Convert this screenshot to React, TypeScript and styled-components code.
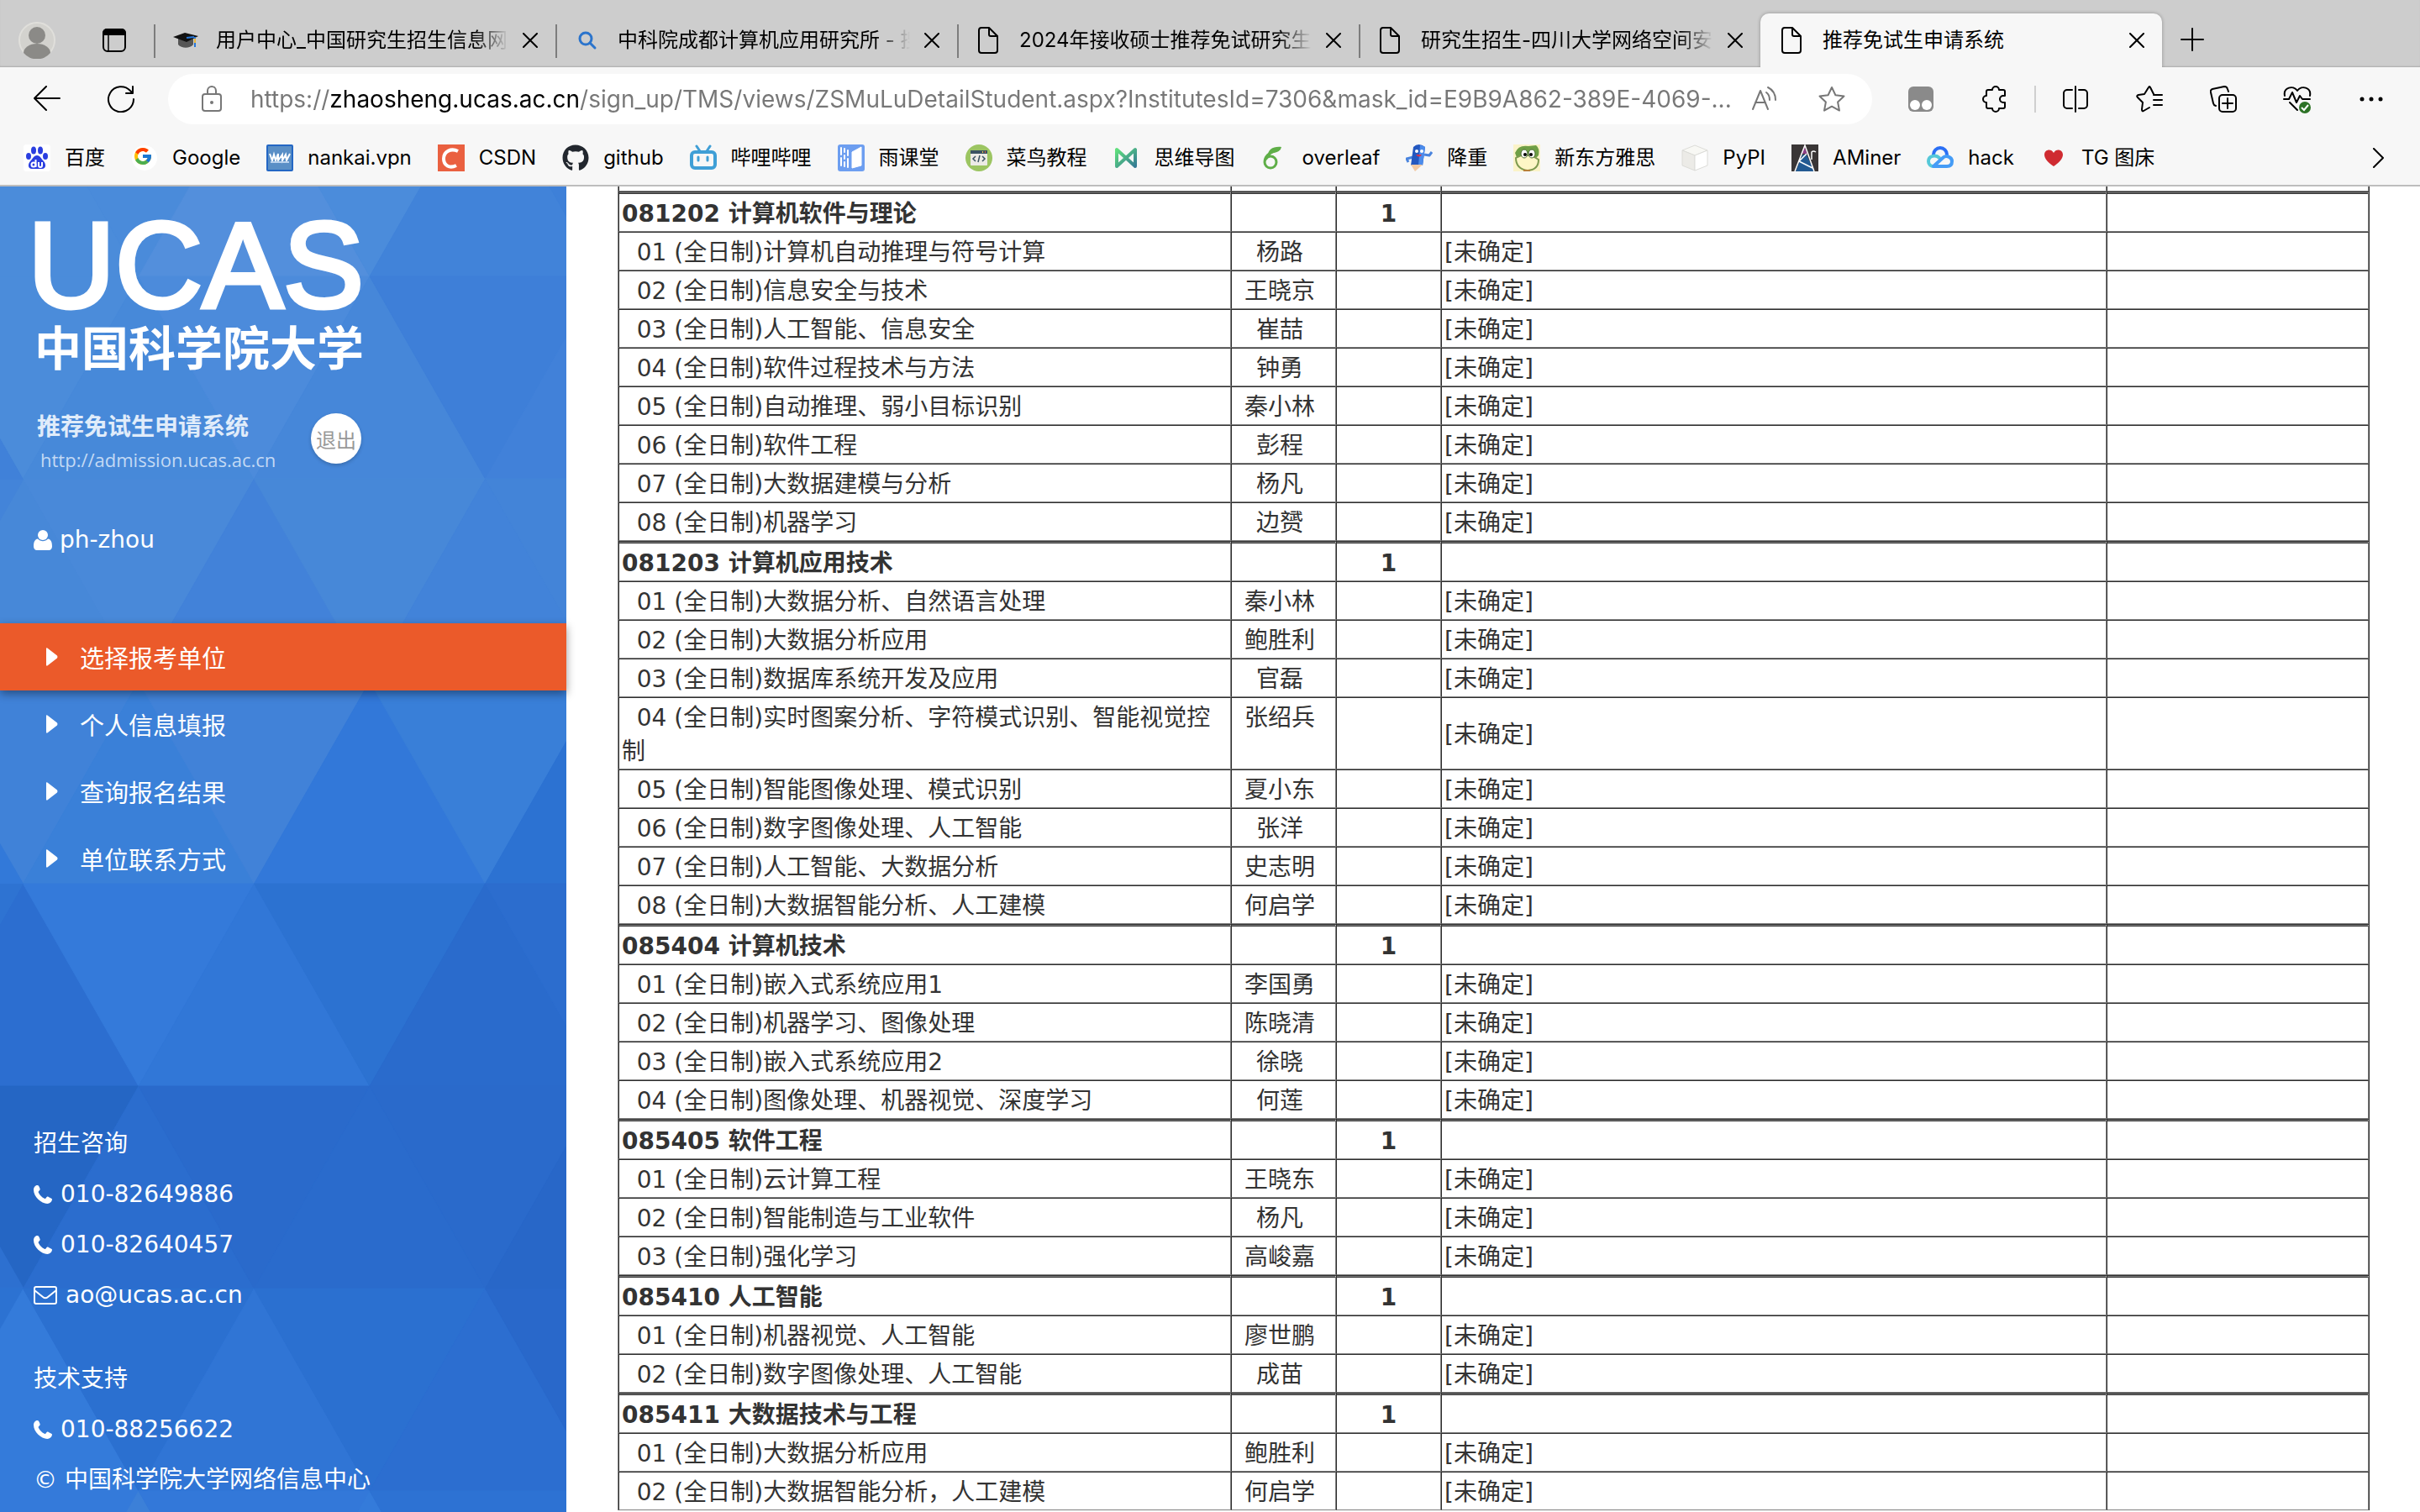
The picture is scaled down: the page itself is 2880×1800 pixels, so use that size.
import React from 'react';
import styled, { createGlobalStyle, css } from 'styled-components';
import { FaGithub } from 'react-icons/fa';
import { FcGoogle } from 'react-icons/fc';

const uiFont = `Inter, "Noto Sans CJK SC", sans-serif`;
const pageFont = `"DejaVu Sans", "Noto Sans CJK SC", sans-serif`;

const GlobalStyle = createGlobalStyle`
  *, *::before, *::after { box-sizing: border-box; }
  body { margin: 0; background: #fff; }
  button, input { font: inherit; border: 0; padding: 0; background: none; color: inherit; }
  a { color: inherit; text-decoration: none; }
  ul { list-style: none; margin: 0; padding: 0; }
  svg { display: block; flex: none; }
`;

/* ---------- browser chrome ---------- */

const Shell = styled.div`
  display: flex;
  flex-direction: column;
  height: 100vh;
  overflow: hidden;
  font-family: ${uiFont};
  color: #000;
`;

const TabStrip = styled.div`
  display: flex;
  align-items: flex-end;
  height: 80px;
  background: #cdcdcd;
  box-shadow: inset 0 -2px 2px -1px #aaa;
`;

const StripTools = styled.div`
  display: flex;
  align-items: center;
  justify-content: space-between;
  width: 183px;
  height: 64px;
  padding: 0 33px 0 22px;
`;

const Tab = styled.div<{ $active?: boolean }>`
  position: relative;
  display: flex;
  align-items: center;
  width: 478px;
  height: 64px;
  padding: 0 14px 0 22px;
  ${(p) =>
    p.$active
      ? css`
          background: #f7f7f7;
          border-radius: 10px 10px 0 0;
          box-shadow: 0 0 4px rgba(0, 0, 0, 0.3);
          clip-path: inset(-4px -4px 0 -4px);
        `
      : css`
          &::before {
            content: '';
            position: absolute;
            left: 0;
            top: 13px;
            width: 2px;
            height: 40px;
            background: #7d7d7d;
          }
        `}
`;

const TabTitle = styled.button<{ $fade: boolean }>`
  display: flex;
  align-items: center;
  flex: 1;
  min-width: 0;
  gap: 20px;
  height: 64px;
  text-align: left;
  font-size: 24px;
  line-height: 36px;
  span {
    flex: 1;
    min-width: 0;
    overflow: hidden;
    white-space: nowrap;
    ${(p) => p.$fade && `mask-image: linear-gradient(90deg, #000 calc(100% - 40px), transparent);`}
  }
`;

const IconButton = styled.button<{ $w?: number }>`
  display: flex;
  align-items: center;
  justify-content: center;
  width: ${(p) => p.$w ?? 32}px;
  height: 32px;
  flex: none;
`;

const CloseButton = styled(IconButton)`
  margin-left: 10px;
`;

const NewTab = styled(IconButton)`
  align-self: center;
  margin: 14px 0 0 20px;
`;

const Toolbar = styled.div`
  display: flex;
  align-items: center;
  padding: 8px 42px 8px 40px;
  background: #f7f7f7;
`;

const NavButtons = styled.div`
  display: flex;
  gap: 56px;
  width: 160px;
`;

const Omnibox = styled.label`
  display: flex;
  align-items: center;
  flex: 1;
  height: 60px;
  padding: 0 32px 0 36px;
  border-radius: 30px;
  background: #fff;
  color: #777;
`;

const UrlInput = styled.input`
  flex: 1;
  min-width: 0;
  height: 60px;
  margin-left: 30px;
  outline: 0;
  font-size: 28px;
  text-overflow: ellipsis;
  color: transparent;
  background: linear-gradient(90deg, #777 94px, #000 94px, #000 392px, #777 392px);
  background-clip: text;
  -webkit-background-clip: text;
`;

const OmniTools = styled.div`
  display: flex;
  gap: 48px;
`;

const Tools = styled.div`
  display: flex;
  align-items: center;
  margin-left: 42px;
`;

const ToolGroup = styled.div`
  display: flex;
  gap: 56px;
`;

const Divider = styled.span`
  width: 2px;
  height: 32px;
  margin: 0 31px;
  background: #cfcfcf;
`;

const BookmarkBar = styled.nav`
  display: flex;
  align-items: center;
  justify-content: space-between;
  height: 66px;
  padding: 0 42px 0 28px;
  border-bottom: 2px solid #bdbdbd;
  background: #f7f7f7;
`;

const BookmarkList = styled.ul`
  display: flex;
  gap: 31px;
`;

const Bookmark = styled.a`
  display: flex;
  align-items: center;
  gap: 17px;
  font-size: 24px;
  line-height: 36px;
  white-space: nowrap;
`;

/* ---------- page ---------- */

const Page = styled.div`
  display: flex;
  flex: 1;
  min-height: 0;
  font-family: ${pageFont};
  background: #fff;
`;

const Sidebar = styled.aside`
  position: relative;
  z-index: 1;
  flex: none;
  width: 674px;
  padding-top: 26px;
  background: #2c70d2;
  color: #fff;
  font-size: 28px;
`;

const Backdrop = styled.svg`
  position: absolute;
  inset: 0;
  width: 100%;
  height: 100%;
  z-index: -1;
`;

const Logo = styled.div`
  padding-left: 33px;
  font: 144px/138px "Liberation Sans", Arial, sans-serif;
  -webkit-text-stroke: 5px #fff;
`;

const LogoName = styled.div`
  padding-left: 41px;
  font: 700 56px/50px "Noto Sans CJK SC", sans-serif;
`;

const SystemRow = styled.div`
  display: flex;
  align-items: flex-start;
  margin-top: 53px;
  padding-left: 44px;
`;

const SystemInfo = styled.div`
  width: 326px;
  color: #e0ecfa;
  strong {
    display: block;
    font-weight: 700;
    line-height: 40px;
  }
  a {
    display: block;
    padding-left: 4px;
    font-family: "Open Sans", "Noto Sans", sans-serif;
    font-size: 22px;
    line-height: 36px;
    color: #c3d9f4;
  }
`;

const Logout = styled.button`
  width: 60px;
  height: 60px;
  margin-top: 3px;
  border-radius: 50%;
  background: #fff;
  color: #999;
  font-size: 24px;
  box-shadow: 0 2px 4px rgba(0, 0, 0, 0.2);
`;

const User = styled.div`
  display: flex;
  align-items: center;
  gap: 9px;
  margin: 58px 0 79px;
  padding-left: 40px;
  line-height: 40px;
`;

const MenuLink = styled.a<{ $active: boolean }>`
  display: flex;
  align-items: center;
  gap: 26px;
  height: 80px;
  padding-bottom: 1px;
  padding-left: 55px;
  font-size: 29px;
  ${(p) =>
    p.$active &&
    css`
      background: #eb5a2a;
      box-shadow: 0 4px 10px rgba(0, 0, 0, 0.4);
    `}
`;

const Contacts = styled.section`
  display: grid;
  gap: 40px;
  margin-top: 270px;
  padding-left: 40px;
  line-height: 60px;
`;

const ContactLine = styled.div`
  display: flex;
  align-items: center;
  gap: 10px;
`;

const Content = styled.main`
  flex: 1;
  min-width: 0;
  overflow: hidden;
  padding: 0 60px 0 61px;
`;

const Table = styled.table`
  width: 100%;
  table-layout: fixed;
  border-collapse: separate;
  border-spacing: 0;
  border-left: 1px solid #808080;
  border-right: 1px solid #2e2e2e;
  color: #333;
  font-size: 28px;
  line-height: 40px;
`;

const Col = styled.col<{ $w?: number }>`
  ${(p) => p.$w && `width: ${p.$w}px;`}
`;

const Cell = styled.td<{ $center?: boolean; $top?: boolean }>`
  padding: 4px 3px 0;
  height: 46px;
  border: 1px solid;
  border-color: #2e2e2e #808080 #808080 #2e2e2e;
  text-align: ${(p) => (p.$center ? 'center' : 'left')};
  vertical-align: ${(p) => (p.$top ? 'top' : 'middle')};
`;

const HeadCell = styled(Cell)`
  height: 48px;
  border-top: 3px double #2e2e2e;
  background: linear-gradient(#808080 3px, #fff 3px) border-box;
  font-weight: 700;
`;

const CutCell = styled(Cell)`
  height: 6px;
  padding: 0;
  border-top: 0;
`;

/* ---------- icons ---------- */

const stroke = { fill: 'none', stroke: 'currentColor', strokeWidth: 2, strokeLinecap: 'round', strokeLinejoin: 'round' } as const;

const Avatar = () => (
  <svg width="44" height="44" viewBox="0 0 44 44">
    <circle cx="22" cy="22" r="21" fill="#d3d2ce" stroke="#e0dfdb" strokeWidth="2" />
    <circle cx="22" cy="16" r="10" fill="#8b8a87" />
    <path d="M6 37a16 11 0 0 1 32 0 21 21 0 0 1-32 0z" fill="#8b8a87" />
  </svg>
);
const TabActions = () => (
  <svg width="28" height="28" viewBox="0 0 28 28">
    <rect x="1" y="1" width="26" height="26" rx="5" fill="none" stroke="#000" strokeWidth="2" />
    <path d="M0 8V5a5 5 0 0 1 5-5h18a5 5 0 0 1 5 5v3z" />
    <path d="M7 8v19" stroke="#000" strokeWidth="1.500" />
  </svg>
);
const Cap = () => (
  <svg width="32" height="32" viewBox="0 0 32 32">
    <path d="M7 14v7c4 5 14 5 18 0v-7z" fill="#555" />
    <path d="M1 12l14-5 16 4-14 7z" fill="#111" />
    <path d="M17 13l9-1" stroke="#2677d8" strokeWidth="2" />
    <path d="M27 12v12" stroke="#2677d8" strokeWidth="2" />
    <path d="M27 14v5" stroke="#e8b53a" strokeWidth="2" />
  </svg>
);
const SearchFavicon = () => (
  <svg width="32" height="32" viewBox="0 0 32 32">
    <circle cx="14" cy="14" r="7" fill="none" stroke="#2b74cc" strokeWidth="3" />
    <path d="M19 19l6 6" stroke="#2b74cc" strokeWidth="3" strokeLinecap="round" />
  </svg>
);
const PageIcon = () => (
  <svg width="32" height="32" viewBox="0 0 32 32">
    <path d="M7 1h9l10 10v17a3 3 0 0 1-3 3H7a3 3 0 0 1-3-3V4a3 3 0 0 1 3-3zM16 1v8a2 2 0 0 0 2 2h8" {...stroke} />
  </svg>
);
const CloseIcon = () => (
  <svg width="18" height="18" viewBox="0 0 18 18">
    <path d="M1 1l16 16M17 1L1 17" {...stroke} />
  </svg>
);
const PlusIcon = () => (
  <svg width="28" height="28" viewBox="0 0 28 28">
    <path d="M14 1v26M1 14h26" {...stroke} />
  </svg>
);
const BackIcon = () => (
  <svg width="32" height="32" viewBox="0 0 32 32">
    <path d="M31 15H1M15 1L1 15l14 14" {...stroke} />
  </svg>
);
const ReloadIcon = () => (
  <svg width="32" height="32" viewBox="0 0 32 32">
    <path d="M31 16A15 15 0 1 1 27 6l3 3M30 1v8h-8" {...stroke} />
  </svg>
);
const LockIcon = () => (
  <svg width="32" height="32" viewBox="0 0 32 32">
    <rect x="5" y="10" width="22" height="20" rx="3" {...stroke} />
    <path d="M11 10V6a5 5 0 0 1 10 0v4" {...stroke} />
    <circle cx="16" cy="20" r="2" fill="currentColor" />
  </svg>
);
const ReadAloud = () => (
  <svg width="32" height="32" viewBox="0 0 32 32">
    <path d="M2 28L11 6l9 22M5 20h12M18 8c3 2 4 5 4 9M20 2c6 3 9 8 9 15" {...stroke} />
  </svg>
);
const StarIcon = () => (
  <svg width="32" height="32" viewBox="0 0 32 32">
    <path d="M16 2l4.400 9.200 10.100 1.300-7.400 7 1.900 10.100L16 24.700l-9 4.900 1.900-10.100-7.400-7 10.100-1.300z" {...stroke} />
  </svg>
);
const MonkeyIcon = () => (
  <svg width="32" height="32" viewBox="0 0 32 32">
    <rect x="1" y="1" width="30" height="30" rx="6" fill="#8a8a8a" />
    <circle cx="9" cy="23" r="6" fill="#fff" />
    <circle cx="23" cy="23" r="6" fill="#fff" />
  </svg>
);
const PuzzleIcon = () => (
  <svg width="32" height="32" viewBox="0 0 32 32">
    <path d="M8 5h5a4 4 0 0 1 8 0h5a2 2 0 0 1 2 2v5h-2a4 4 0 0 0 0 8h2v5a2 2 0 0 1-2 2h-5a4 4 0 0 1-8 0H8a2 2 0 0 1-2-2v-5a4 4 0 0 1 0-8V7a2 2 0 0 1 2-2z" {...stroke} />
  </svg>
);
const SplitIcon = () => (
  <svg width="32" height="32" viewBox="0 0 32 32">
    <path d="M12 5H6a4 4 0 0 0-4 4v14a4 4 0 0 0 4 4h6M20 5h6a4 4 0 0 1 4 4v14a4 4 0 0 1-4 4h-6M16 1v30" {...stroke} />
  </svg>
);
const FavoritesIcon = () => (
  <svg width="32" height="32" viewBox="0 0 32 32">
    <path d="M16 26l-7 4q-2 1-2-2l1-8-6-6q-2-2 1-3l7-1 5-8q1-2 2 0l4 8M21 11h10M21 17h10M21 23h10" {...stroke} />
  </svg>
);
const CollectionsIcon = () => (
  <svg width="32" height="32" viewBox="0 0 32 32">
    <rect x="11" y="11" width="20" height="20" rx="4" {...stroke} />
    <path d="M21 15v12M15 21h12M7 24a4 4 0 0 1-3-3L1 8a3 3 0 0 1 2-4l14-3a4 4 0 0 1 4 3l1 3" {...stroke} />
  </svg>
);
const HealthIcon = () => (
  <svg width="34" height="34" viewBox="0 0 34 34">
    <path d="M2 13C0 3 12 0 17 7c5-7 17-4 15 6M1 17h6l4-8 5 12 4-8 3 4h9M8 21l9 9" {...stroke} />
    <circle cx="26" cy="27" r="7" fill="#2d7226" />
    <path d="M22 27l3 3 5-6" fill="none" stroke="#fff" strokeWidth="2" />
  </svg>
);
const DotsIcon = () => (
  <svg width="32" height="32" viewBox="0 0 32 32">
    <circle cx="5" cy="16" r="2.500" />
    <circle cx="16" cy="16" r="2.500" />
    <circle cx="27" cy="16" r="2.500" />
  </svg>
);
const ChevronIcon = () => (
  <svg width="16" height="24" viewBox="0 0 16 24">
    <path d="M3 1l11 11L3 23" {...stroke} />
  </svg>
);
const ArrowIcon = () => (
  <svg width="14" height="22" viewBox="0 0 14 22">
    <path d="M0 1.500C0 0 1 0 2 1l11 8.500q1 1.500 0 3L2 21c-1 1-2 1-2-.5z" fill="#fff" />
  </svg>
);
const UserIcon = () => (
  <svg width="22" height="24" viewBox="0 0 22 24">
    <circle cx="11" cy="6" r="6" fill="#fff" />
    <path d="M5 10.500c3.500 3.600 8.500 3.600 12 0 4 .5 5 4.500 5 9 0 2.500-1.500 4.500-4 4.500H4c-2.500 0-4-2-4-4.500 0-4.500 1-8.500 5-9z" fill="#fff" />
  </svg>
);
const PhoneIcon = () => (
  <svg width="22" height="22" viewBox="0 0 22 22">
    <path d="M4.500 0C6 0 6.500 1.500 7.500 4c.6 1.500-.3 2-1.500 3.200-.6.700-.3 1.300 0 1.900 1.300 2.900 3.600 5.100 6.800 6.700.7.300 1.200.2 1.700-.4 1.400-1.700 1.800-2.200 3.300-1.500l3.400 1.800c.9.500.9.900.7 1.900-.5 2.300-2.600 4.400-5.600 4.400C9 22 0 13.500 0 5.600 0 2.500 1.900 0 4.500 0z" fill="#fff" />
  </svg>
);
const MailIcon = () => (
  <svg width="28" height="22" viewBox="0 0 28 22" fill="none" stroke="#fff" strokeWidth="2">
    <rect x="1" y="1" width="26" height="20" rx="2" />
    <path d="M1 5l10 8q3 2.500 6 0l10-8" />
  </svg>
);

const BaiduMark = () => (
  <svg width="32" height="32" viewBox="0 0 32 32">
    <rect width="32" height="32" rx="3" fill="#fff" />
    <g fill="#2a3ee0">
      <ellipse cx="12" cy="7" rx="3" ry="4.500" />
      <ellipse cx="20" cy="7" rx="3" ry="4.500" />
      <ellipse cx="6" cy="14" rx="3" ry="4" />
      <ellipse cx="26" cy="14" rx="3" ry="4" />
      <path d="M16 13c4 0 5 4 8 7s3 9-2 9H10c-5 0-5-6-2-9s4-7 8-7z" />
    </g>
    <g fill="none" stroke="#fff" strokeWidth="2">
      <circle cx="12" cy="24" r="2.500" />
      <path d="M14.500 18v9M18 21v4q0 2 2 2t2-2v-4" />
    </g>
  </svg>
);
const GoogleMark = () => (
  <svg width="32" height="32" viewBox="0 0 32 32">
    <circle cx="16" cy="16" r="15" fill="#fff" />
    <FcGoogle x="2" y="2" width="28" height="28" />
  </svg>
);
const NankaiMark = () => (
  <svg width="32" height="32" viewBox="0 0 32 32">
    <rect width="32" height="32" rx="2" fill="#2467c4" />
    <rect x="2" y="2" width="28" height="28" fill="#5a8fc6" />
    <path d="M4 11l3 8 2-7 2 7 3-8v8l5-7v7l4-7 1 7 4-8" fill="none" stroke="#fff" strokeWidth="2" />
    <path d="M5 21h22" stroke="#b9d2ee" strokeWidth="2" />
  </svg>
);
const CsdnMark = () => (
  <svg width="32" height="32" viewBox="0 0 32 32">
    <rect width="32" height="32" fill="#ea6040" />
    <path d="M24 8c-8-4-17 0-17 9 0 8 7 12 15 8" fill="none" stroke="#fff" strokeWidth="4" />
  </svg>
);
const GithubMark = () => <FaGithub size={32} color="#22272e" />;
const BiliMark = () => (
  <svg width="32" height="32" viewBox="0 0 32 32">
    <rect x="2" y="9" width="28" height="19" rx="4" fill="none" stroke="#3f9fd6" strokeWidth="4" />
    <path d="M8 2l4 6M24 2l-4 6M10 15v4M21 15v4" stroke="#3f9fd6" strokeWidth="3" strokeLinecap="round" />
  </svg>
);
const RainMark = () => (
  <svg width="32" height="32" viewBox="0 0 32 32">
    <rect width="32" height="32" rx="3" fill="#6d9ef0" />
    <path d="M17 9l11-6v22l-11 3z" fill="#fff" stroke="#fff" strokeLinejoin="round" />
    <path d="M4 4v8M4 16v9M8 5v4M8 13v4M8 21v5M12 7v6M12 17v10" stroke="#fff" strokeWidth="2" strokeLinecap="round" />
  </svg>
);
const RunoobMark = () => (
  <svg width="32" height="32" viewBox="0 0 32 32">
    <circle cx="16" cy="16" r="16" fill="#9cc562" />
    <rect x="6" y="7" width="20" height="18" rx="1" fill="#ecebe6" />
    <path d="M6 7h20v4H6z" fill="#3b5363" />
    <path d="M20 9h1" stroke="#f2c64a" strokeWidth="2" />
    <path d="M23 9h1" stroke="#e0573e" strokeWidth="2" />
    <path d="M12 14l-3 3 3 3M20 14l3 3-3 3M17 13l-2 8" fill="none" stroke="#3b5363" strokeWidth="1.500" />
  </svg>
);
const MindMark = () => (
  <svg width="32" height="32" viewBox="0 0 32 32">
    <defs>
      <linearGradient id="mind" x1="0" y1="0" x2="1" y2="1">
        <stop offset="0" stopColor="#5fe07c" />
        <stop offset="1" stopColor="#347a94" />
      </linearGradient>
    </defs>
    <path d="M4 6v20L26 6v20z" fill="none" stroke="url(#mind)" strokeWidth="4" strokeLinejoin="round" />
  </svg>
);
const OverleafMark = () => (
  <svg width="32" height="32" viewBox="0 0 32 32">
    <path d="M8 13C8 6 14 2 24 3q-1 6-10 7-4 1-6 3z" fill="#5fae48" />
    <path d="M18 7C9 10 4 15 4 21a7 7 0 1 0 7-7c-2 0-4 1-6 4" fill="none" stroke="#5fae48" strokeWidth="3" />
  </svg>
);
const PencilMark = () => (
  <svg width="32" height="32" viewBox="0 0 32 32">
    <path d="M9 15l-8 2 2 4M22 12l6 1 3-4" fill="none" stroke="#4a84de" strokeWidth="3" strokeLinejoin="round" />
    <path d="M9 3q6-6 14 0l-3 22H6z" fill="#2458c0" />
    <path d="M17 1q4 0 6 2l-3 22h-5z" fill="#4c8cec" />
    <path d="M6 24h14l-9 8z" fill="#f3c9a3" />
    <circle cx="13" cy="8" r="2" fill="#fff" />
    <circle cx="19" cy="8" r="2" fill="#fff" />
    <path d="M12 12q4 5 7 0z" fill="#d8324a" />
  </svg>
);
const OwlMark = () => (
  <svg width="32" height="32" viewBox="0 0 32 32">
    <rect width="32" height="32" fill="#fbf3c8" />
    <path d="M2 10Q6 0 18 2l9-1q5 4 3 12l-5 5H5z" fill="#6f9f45" />
    <path d="M3 16q13-8 27 2 0 12-13 13Q3 29 3 16z" fill="#fdf6c6" stroke="#7e9a4f" strokeWidth="2" />
    <ellipse cx="13" cy="11" rx="4" ry="5" fill="#fff" stroke="#456a2c" />
    <ellipse cx="22" cy="11" rx="4" ry="5" fill="#fff" stroke="#456a2c" />
    <circle cx="14" cy="12" r="2" />
    <circle cx="21" cy="12" r="2" />
    <path d="M12 31h8" stroke="#b8803a" strokeWidth="2" />
  </svg>
);
const BoxMark = () => (
  <svg width="32" height="32" viewBox="0 0 32 32" stroke="#dcdcd8">
    <path d="M1 7l15-6 15 6-15 6z" fill="#f8f8f4" />
    <path d="M1 7l15 6v18L1 25z" fill="#ecebe7" />
    <path d="M31 7l-15 6v18l15-6z" fill="#fff" />
  </svg>
);
const AMinerMark = () => (
  <svg width="32" height="32" viewBox="0 0 32 32">
    <rect width="32" height="32" fill="#3a3636" />
    <path d="M15 2l4 9h-7z" fill="#8d3f86" />
    <path d="M5 32l8-20h5l9 20z" fill="#235a92" />
    <path d="M4 32L16 1l11 31M9 20l9-9M9 20l16 8M24 18V9q2-2 5 0" fill="none" stroke="#fff" strokeWidth="1.500" />
  </svg>
);
const CloudMark = () => (
  <svg width="32" height="32" viewBox="0 0 32 32" fill="none" strokeWidth="4" strokeLinecap="round">
    <path d="M8 12a8 8 0 0 1 16 0" stroke="#2b6ff5" />
    <path d="M15 16c-4-4-13-3-13 4 0 4 3 6 6 6" stroke="#55c8d8" />
    <path d="M8 26l11-10c4-4 11-1 11 4s-3 6-6 6z" stroke="#459cf6" strokeLinejoin="round" />
  </svg>
);
const HeartMark = () => (
  <svg width="32" height="32" viewBox="0 0 32 32">
    <path d="M16 26C9 21 5 17 5 12c0-6 8-8 11-2 3-6 11-4 11 2 0 5-4 9-11 14z" fill="#cf2b31" />
  </svg>
);

/* ---------- data ---------- */

const tabs: { title: string; icon: React.FC; active?: boolean }[] = [
  { title: '用户中心_中国研究生招生信息网', icon: Cap },
  { title: '中科院成都计算机应用研究所 - 搜索', icon: SearchFavicon },
  { title: '2024年接收硕士推荐免试研究生', icon: PageIcon },
  { title: '研究生招生-四川大学网络空间安全', icon: PageIcon },
  { title: '推荐免试生申请系统', icon: PageIcon, active: true },
];

const bookmarks: [string, React.FC][] = [
  ['百度', BaiduMark],
  ['Google', GoogleMark],
  ['nankai.vpn', NankaiMark],
  ['CSDN', CsdnMark],
  ['github', GithubMark],
  ['哔哩哔哩', BiliMark],
  ['雨课堂', RainMark],
  ['菜鸟教程', RunoobMark],
  ['思维导图', MindMark],
  ['overleaf', OverleafMark],
  ['降重', PencilMark],
  ['新东方雅思', OwlMark],
  ['PyPI', BoxMark],
  ['AMiner', AMinerMark],
  ['hack', CloudMark],
  ['TG 图床', HeartMark],
];

const menu = ['选择报考单位', '个人信息填报', '查询报名结果', '单位联系方式'];

const majors: { name: string; quota: number; topics: [string, string][] }[] = [
  {
    name: '081202 计算机软件与理论',
    quota: 1,
    topics: [
      ['计算机自动推理与符号计算', '杨路'],
      ['信息安全与技术', '王晓京'],
      ['人工智能、信息安全', '崔喆'],
      ['软件过程技术与方法', '钟勇'],
      ['自动推理、弱小目标识别', '秦小林'],
      ['软件工程', '彭程'],
      ['大数据建模与分析', '杨凡'],
      ['机器学习', '边赟'],
    ],
  },
  {
    name: '081203 计算机应用技术',
    quota: 1,
    topics: [
      ['大数据分析、自然语言处理', '秦小林'],
      ['大数据分析应用', '鲍胜利'],
      ['数据库系统开发及应用', '官磊'],
      ['实时图案分析、字符模式识别、智能视觉控制', '张绍兵'],
      ['智能图像处理、模式识别', '夏小东'],
      ['数字图像处理、人工智能', '张洋'],
      ['人工智能、大数据分析', '史志明'],
      ['大数据智能分析、人工建模', '何启学'],
    ],
  },
  {
    name: '085404 计算机技术',
    quota: 1,
    topics: [
      ['嵌入式系统应用1', '李国勇'],
      ['机器学习、图像处理', '陈晓清'],
      ['嵌入式系统应用2', '徐晓'],
      ['图像处理、机器视觉、深度学习', '何莲'],
    ],
  },
  {
    name: '085405 软件工程',
    quota: 1,
    topics: [
      ['云计算工程', '王晓东'],
      ['智能制造与工业软件', '杨凡'],
      ['强化学习', '高峻嘉'],
    ],
  },
  {
    name: '085410 人工智能',
    quota: 1,
    topics: [
      ['机器视觉、人工智能', '廖世鹏'],
      ['数字图像处理、人工智能', '成苗'],
    ],
  },
  {
    name: '085411 大数据技术与工程',
    quota: 1,
    topics: [
      ['大数据分析应用', '鲍胜利'],
      ['大数据智能分析，人工建模', '何启学'],
    ],
  },
];

/* Triangle mosaic: each row lists fills left to right, alternating up and down triangles. */
const SIDE = 275;
const ROW = 241;
const mosaic: { up: boolean; fills: string[] }[] = [
  { up: true, fills: ['#4b8cda', '#4a8bda', '#538fdc', '#4b8cdb', '#4183d9', '#3e80d8'] },
  { up: false, fills: ['#4b8cda', '#4789d9', '#4c8bdb', '#4687d9', '#3e7fd8', '#4181d9'] },
  { up: true, fills: ['#4788d8', '#4989d9', '#4282d9', '#4788d8', '#4283d9', '#4384d8'] },
  { up: false, fills: ['#4082d8', '#3a80d8', '#4182d8', '#3278d9', '#397fd8', '#2c72d2'] },
  { up: true, fills: ['#2c6ed0', '#347ada', '#3177d7', '#2c72d1', '#2a6bcc', '#2c6dce'] },
  { up: false, fills: ['#2566c4', '#2b6dce', '#2a6acb', '#2a6bcc', '#2a6acb', '#2867c8'] },
  { up: true, fills: ['#347bda', '#2b70d0', '#3075d5', '#2b70d0', '#2c6ed0', '#2968ca'] },
  { up: false, fills: ['#347ada', '#3c80d8', '#3378d9', '#347bda', '#2d72d3', '#2b6ed0'] },
];

const Mosaic = () => (
  <Backdrop aria-hidden="true">
    {mosaic.map((row, r) => {
      const top = -134 + r * ROW;
      const bottom = top + ROW;
      return row.fills.map((fill, i) => {
        const left = -110 + (i * SIDE) / 2;
        const mid = left + SIDE / 2;
        const right = left + SIDE;
        const pointsUp = row.up === (i % 2 === 0);
        const [base, apex] = pointsUp ? [bottom, top] : [top, bottom];
        return (
          <polygon key={`${r}-${i}`} points={`${left},${base} ${right},${base} ${mid},${apex}`} fill={fill} stroke={fill} />
        );
      });
    })}
    <polygon points="0,838 0,782 28,830" fill="#3279d9" />
    <polygon points="0,830 28,830 0,879" fill="#2e73d2" />
    <polygon points="0,1262 28,1311 0,1311" fill="#2d70d0" />
    <polygon points="0,1311 28,1311 0,1360" fill="#2c72d2" />
    <polygon points="0,300 28,349 0,349" fill="#4081d9" />
    <polygon points="0,349 28,349 0,398" fill="#4384d9" />
  </Backdrop>
);

/* ---------- app ---------- */

export default function App() {
  return (
    <Shell>
      <GlobalStyle />
      <header>
        <TabStrip>
          <StripTools>
            <IconButton $w={44} aria-label="个人资料"><Avatar /></IconButton>
            <IconButton $w={28} aria-label="标签页操作"><TabActions /></IconButton>
          </StripTools>
          {tabs.map(({ title, icon: Icon, active }) => (
            <Tab key={title} $active={active}>
              <TabTitle $fade={!active}>
                <Icon />
                <span>{title}</span>
              </TabTitle>
              <CloseButton aria-label="关闭"><CloseIcon /></CloseButton>
            </Tab>
          ))}
          <NewTab aria-label="新建标签页"><PlusIcon /></NewTab>
        </TabStrip>
        <Toolbar>
          <NavButtons>
            <IconButton aria-label="后退"><BackIcon /></IconButton>
            <IconButton aria-label="刷新"><ReloadIcon /></IconButton>
          </NavButtons>
          <Omnibox>
            <LockIcon />
            <UrlInput
              aria-label="地址栏"
              defaultValue="https://zhaosheng.ucas.ac.cn/sign_up/TMS/views/ZSMuLuDetailStudent.aspx?InstitutesId=7306&mask_id=E9B9A862-389E-4069-..."
            />
            <OmniTools>
              <IconButton aria-label="大声朗读"><ReadAloud /></IconButton>
              <IconButton aria-label="收藏此页"><StarIcon /></IconButton>
            </OmniTools>
          </Omnibox>
          <Tools>
            <ToolGroup>
              <IconButton aria-label="篡改猴"><MonkeyIcon /></IconButton>
              <IconButton aria-label="扩展"><PuzzleIcon /></IconButton>
            </ToolGroup>
            <Divider />
            <ToolGroup>
              <IconButton aria-label="分屏"><SplitIcon /></IconButton>
              <IconButton aria-label="收藏夹"><FavoritesIcon /></IconButton>
              <IconButton aria-label="集锦"><CollectionsIcon /></IconButton>
              <IconButton aria-label="浏览器概要"><HealthIcon /></IconButton>
              <IconButton aria-label="更多"><DotsIcon /></IconButton>
            </ToolGroup>
          </Tools>
        </Toolbar>
        <BookmarkBar>
          <BookmarkList>
            {bookmarks.map(([name, Icon]) => (
              <li key={name}>
                <Bookmark href="#"><Icon />{name}</Bookmark>
              </li>
            ))}
          </BookmarkList>
          <IconButton $w={16} aria-label="更多书签"><ChevronIcon /></IconButton>
        </BookmarkBar>
      </header>
      <Page>
        <Sidebar>
          <Mosaic />
          <Logo>UCAS</Logo>
          <LogoName>中国科学院大学</LogoName>
          <SystemRow>
            <SystemInfo>
              <strong>推荐免试生申请系统</strong>
              <a href="#">http://admission.ucas.ac.cn</a>
            </SystemInfo>
            <Logout>退出</Logout>
          </SystemRow>
          <User><UserIcon />ph-zhou</User>
          <nav>
            <ul>
              {menu.map((item, i) => (
                <li key={item}>
                  <MenuLink href="#" $active={i === 0}><ArrowIcon />{item}</MenuLink>
                </li>
              ))}
            </ul>
          </nav>
          <Contacts>
            <div>
              <ContactLine>招生咨询</ContactLine>
              <ContactLine><PhoneIcon />010-82649886</ContactLine>
              <ContactLine><PhoneIcon />010-82640457</ContactLine>
              <ContactLine><MailIcon />ao@ucas.ac.cn</ContactLine>
            </div>
            <div>
              <ContactLine>技术支持</ContactLine>
              <ContactLine><PhoneIcon />010-88256622</ContactLine>
              <ContactLine>© 中国科学院大学网络信息中心</ContactLine>
            </div>
          </Contacts>
        </Sidebar>
        <Content>
          <Table>
            <colgroup>
              <Col $w={729} />
              <Col $w={125} />
              <Col $w={125} />
              <Col />
              <Col $w={312} />
            </colgroup>
            <tbody>
              <tr>
                <CutCell /><CutCell /><CutCell /><CutCell /><CutCell />
              </tr>
              {majors.map((major) => (
                <React.Fragment key={major.name}>
                  <tr>
                    <HeadCell>{major.name}</HeadCell>
                    <HeadCell />
                    <HeadCell $center>{major.quota}</HeadCell>
                    <HeadCell />
                    <HeadCell />
                  </tr>
                  {major.topics.map(([topic, tutor], i) => (
                    <tr key={topic}>
                      <Cell>{`\u00a0\u00a00${i + 1} (全日制)${topic}`}</Cell>
                      <Cell $center $top>{`${tutor}\u00a0`}</Cell>
                      <Cell />
                      <Cell>[未确定]</Cell>
                      <Cell />
                    </tr>
                  ))}
                </React.Fragment>
              ))}
            </tbody>
          </Table>
        </Content>
      </Page>
    </Shell>
  );
}
